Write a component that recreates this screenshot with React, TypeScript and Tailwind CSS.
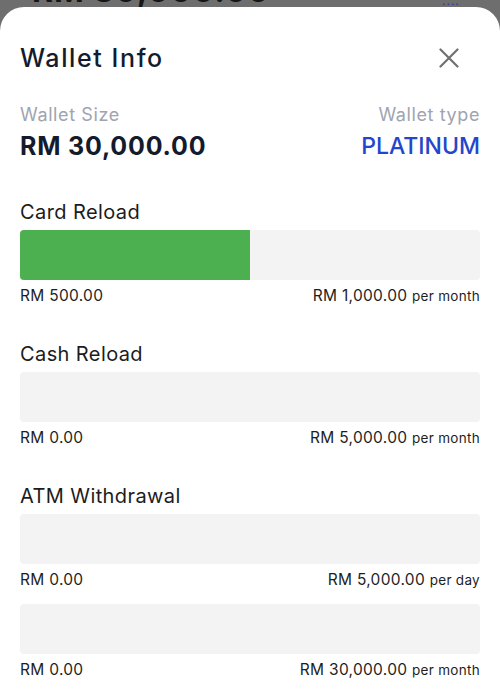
import React from 'react';

type Limit = {
  used: string;
  max: string;
  period: string;
  percent: number;
};

type Section = {
  title: string;
  limits: Limit[];
};

const sections: Section[] = [
  {
    title: 'Card Reload',
    limits: [{ used: 'RM 500.00', max: 'RM 1,000.00', period: 'per month', percent: 50 }],
  },
  {
    title: 'Cash Reload',
    limits: [{ used: 'RM 0.00', max: 'RM 5,000.00', period: 'per month', percent: 0 }],
  },
  {
    title: 'ATM Withdrawal',
    limits: [
      { used: 'RM 0.00', max: 'RM 5,000.00', period: 'per day', percent: 0 },
      { used: 'RM 0.00', max: 'RM 30,000.00', period: 'per month', percent: 0 },
    ],
  },
];

const LimitBar: React.FC<{ limit: Limit }> = ({ limit }) => (
  <div>
    <div className="h-[50px] w-full rounded-[4px] bg-[#f3f3f3] overflow-hidden">
      <div className="h-full bg-[#4caf50]" style={{ width: `${limit.percent}%` }} />
    </div>
    <div className="mt-[6px] flex items-baseline justify-between text-[15.5px] leading-[20px] text-[#1e1e1e] tracking-[0.3px]">
      <span>{limit.used}</span>
      <span>
        {limit.max} <span className="text-[13.5px]">{limit.period}</span>
      </span>
    </div>
  </div>
);

export default function App() {
  return (
    <div
      className="min-h-screen w-[500px] bg-[#6e6e6e] overflow-hidden"
      style={{ fontFamily: 'Inter, "Noto Sans", sans-serif' }}
    >
      {/* page behind the sheet, mostly hidden */}
      <div className="h-[7px] overflow-hidden relative">
        <div className="absolute left-[32px] top-[-21.5px] text-[32px] font-bold leading-[24px] text-[#151515] tracking-[1px]">
          RM 30,000.00
        </div>
        <div className="absolute left-[442px] top-[-3px] text-[12px] leading-[8px] tracking-[1px] text-[#2a3a9a]">
          ....
        </div>
      </div>

      <div className="rounded-t-[24px] bg-white px-5 pt-[35px] pb-6">
        <div className="flex items-center justify-between">
          <h2 className="text-[25px] leading-[32px] font-medium text-[#141b2d] tracking-[1.6px]">
            Wallet Info
          </h2>
          <svg width="20" height="20" viewBox="0 0 20 20" className="mr-[21px]">
            <path d="M1.5 1.5 L18.5 18.5 M18.5 1.5 L1.5 18.5" stroke="#707070" strokeWidth="2.2" strokeLinecap="round" />
          </svg>
        </div>

        <div className="mt-[29px] flex justify-between">
          <div>
            <div className="text-[18px] leading-[24px] text-[#9ea4b0] tracking-[0.6px]">Wallet Size</div>
            <div className="mt-[3px] text-[25px] leading-[32px] font-bold text-[#141b2d] tracking-[0.8px]">
              RM 30,000.00
            </div>
          </div>
          <div className="text-right">
            <div className="text-[18px] leading-[24px] text-[#9ea4b0] tracking-[0.6px]">Wallet type</div>
            <div className="mt-[3px] text-[23px] leading-[32px] font-medium text-[#2346cc]">PLATINUM</div>
          </div>
        </div>

        <div className="mt-[36px] flex flex-col gap-[34px]">
          {sections.map((section) => (
            <div key={section.title}>
              <div className="mb-[4px] text-[20px] leading-[28px] text-[#1c1c1c] tracking-[0.4px]">
                {section.title}
              </div>
              <div className="flex flex-col gap-[14px]">
                {section.limits.map((limit, i) => (
                  <LimitBar key={i} limit={limit} />
                ))}
              </div>
            </div>
          ))}
        </div>
      </div>
    </div>
  );
}
